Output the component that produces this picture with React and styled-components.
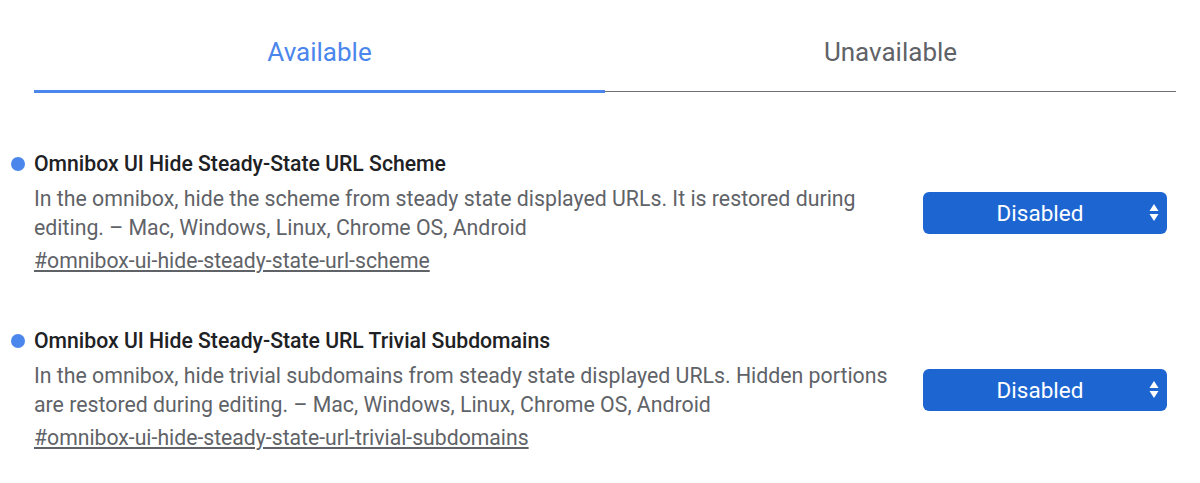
import React from "react";
import styled, { createGlobalStyle } from "styled-components";

const Global = createGlobalStyle`
  html, body { margin: 0; padding: 0; background: #fff; }
  body { font-family: Roboto, "Noto Sans", Arial, sans-serif; }
`;

const Page = styled.div`
  width: 1200px;
  height: 483px;
  overflow: hidden;
  box-sizing: border-box;
`;

const TabList = styled.div`
  display: flex;
  align-items: flex-end;
  margin-left: 34px;
  width: 1142px;
`;

const Tab = styled.div`
  flex: 1;
  text-align: center;
  font-size: 26px;
  line-height: 32px;
  padding-top: 36px;
  box-sizing: border-box;
  color: ${(p) => (p.$active ? "#4a86ec" : "#5f6368")};
  padding-bottom: ${(p) => (p.$active ? "22px" : "23px")};
  border-bottom: ${(p) => (p.$active ? "3px solid #4a86ec" : "1px solid #6f7276")};
  margin-bottom: ${(p) => (p.$active ? "0" : "1px")};
`;

const List = styled.div`
  display: flex;
  flex-direction: column;
  gap: 53px;
  margin-top: 58px;
  padding-right: 33px;
`;

const Item = styled.div`
  display: flex;
  align-items: center;
  gap: 30px;
`;

const Body = styled.div`
  flex: 1;
  padding-left: 34px;
`;

const Title = styled.div`
  display: flex;
  align-items: center;
  font-size: 21.2px;
  font-weight: 500;
  line-height: 26px;
  color: #202124;
`;

const Dot = styled.span`
  width: 14px;
  height: 14px;
  border-radius: 50%;
  background: #4a86ec;
  margin-left: -23px;
  margin-right: 9px;
  flex: none;
`;

const Desc = styled.div`
  font-size: 21.3px;
  line-height: 29px;
  color: #5f6368;
  margin-top: 7px;
`;

const Link = styled.a`
  display: block;
  font-size: 21.2px;
  line-height: 29px;
  color: #5f6368;
  text-decoration: underline;
  margin-top: 4px;
`;

const Select = styled.div`
  position: relative;
  flex: none;
  width: 244px;
  height: 42px;
  border-radius: 6px;
  background: #1d66d2;
  color: #fff;
  font-size: 22.5px;
  display: flex;
  align-items: center;
  justify-content: center;
  padding-right: 10px;
  box-sizing: border-box;
`;

const Arrows = styled.svg`
  position: absolute;
  right: 8px;
  top: 12px;
`;

const flags = [
  {
    title: "Omnibox UI Hide Steady-State URL Scheme",
    desc: "In the omnibox, hide the scheme from steady state displayed URLs. It is restored during editing. – Mac, Windows, Linux, Chrome OS, Android",
    link: "#omnibox-ui-hide-steady-state-url-scheme",
  },
  {
    title: "Omnibox UI Hide Steady-State URL Trivial Subdomains",
    desc: "In the omnibox, hide trivial subdomains from steady state displayed URLs. Hidden portions are restored during editing. – Mac, Windows, Linux, Chrome OS, Android",
    link: "#omnibox-ui-hide-steady-state-url-trivial-subdomains",
  },
];

export default function App() {
  return (
    <Page>
      <Global />
      <TabList>
        <Tab $active>Available</Tab>
        <Tab>Unavailable</Tab>
      </TabList>
      <List>
        {flags.map((f) => (
          <Item key={f.link}>
            <Body>
              <Title>
                <Dot />
                {f.title}
              </Title>
              <Desc>{f.desc}</Desc>
              <Link href={f.link}>{f.link}</Link>
            </Body>
            <Select>
              Disabled
              <Arrows width="10" height="18" viewBox="0 0 10 18">
                <path d="M5 0 L9.5 7 L0.5 7 Z" fill="#fff" />
                <path d="M0.5 10 L9.5 10 L5 17 Z" fill="#fff" />
              </Arrows>
            </Select>
          </Item>
        ))}
      </List>
    </Page>
  );
}
